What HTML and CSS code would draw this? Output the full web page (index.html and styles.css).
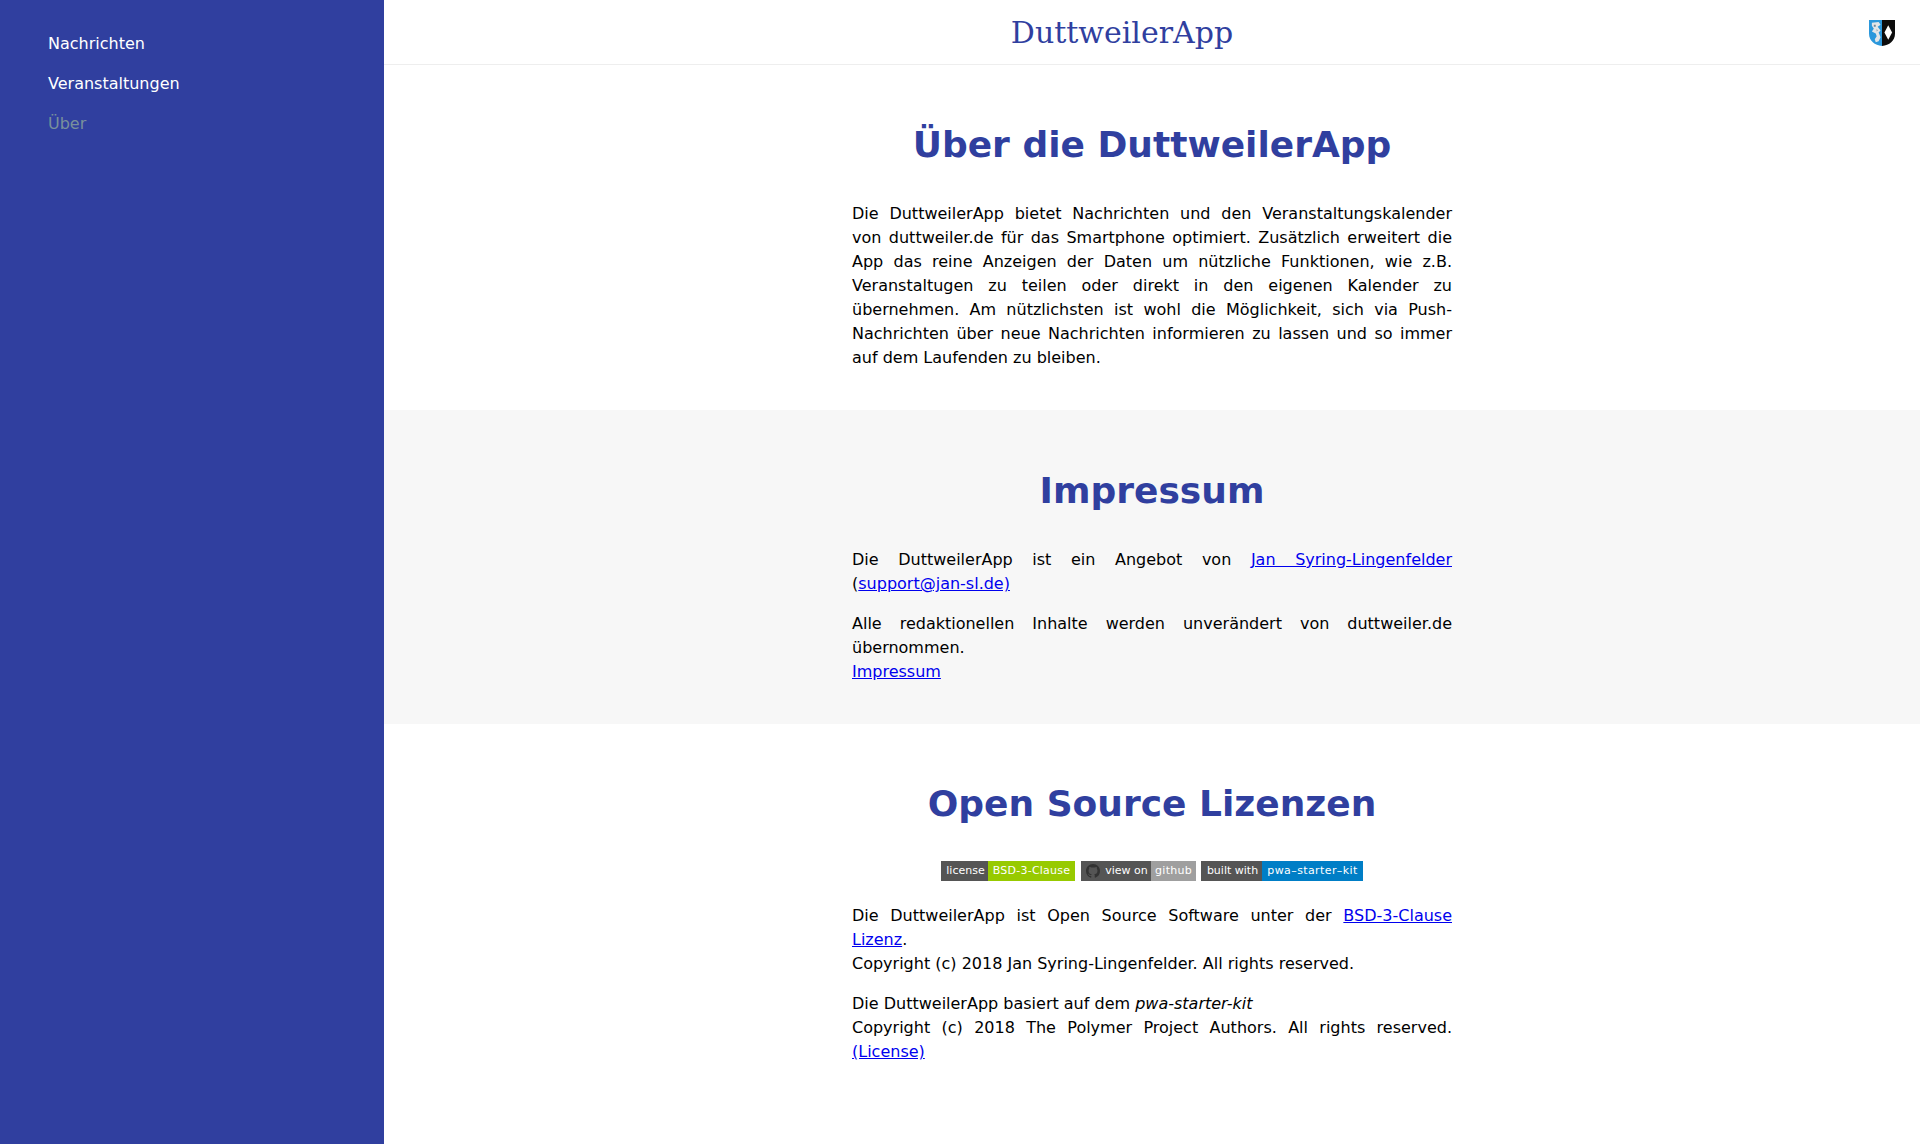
FILE: index.html
```html
<!DOCTYPE html>
<html lang="de">
<head>
  <meta charset="UTF-8">
  <title>DuttweilerApp</title>
  <link rel="stylesheet" href="styles.css">
</head>
<body>
  <nav class="drawer">
    <a href="#">Nachrichten</a>
    <a href="#">Veranstaltungen</a>
    <a href="#" class="selected">Über</a>
  </nav>
  <div class="main">
    <header class="toolbar">
      <div class="title">DuttweilerApp</div>
      <svg class="crest" width="26" height="27" viewBox="0 0 27 28">
        <path d="M0 1H13.500V28C6 27 0 23 0 15Z" fill="#2b98dc"/>
        <path d="M13.500 1H27V15C27 23 21 27 13.500 28Z" fill="#0c0c0c"/>
        <path d="M3 4L10 3L12 6L9 8L12 12L10 14L12 19L10 23L7 24L6 21L8 18L7 15L3 13L5 10L3 7Z" fill="#e3e6e8"/>
        <path d="M5 6L7 6L7 8L5 8ZM8 10L9 12L8 13Z" fill="#6f8799"/>
        <path d="M20 6.500L24 14L20 21.500L16 14Z" fill="#fff"/>
      </svg>
    </header>

    <section>
      <h2>Über die DuttweilerApp</h2>
      <p>Die DuttweilerApp bietet Nachrichten und den Veranstaltungskalender von duttweiler.de für das Smartphone optimiert. Zusätzlich erweitert die App das reine Anzeigen der Daten um nützliche Funktionen, wie z.B. Veranstaltugen zu teilen oder direkt in den eigenen Kalender zu übernehmen. Am nützlichsten ist wohl die Möglichkeit, sich via Push-Nachrichten über neue Nachrichten informieren zu lassen und so immer auf dem Laufenden zu bleiben.</p>
    </section>

    <section class="alt">
      <h2>Impressum</h2>
      <p>Die DuttweilerApp ist ein Angebot von <a href="#">Jan Syring-Lingenfelder</a> (<a href="#">support@jan-sl.de)</a></p>
      <p>Alle redaktionellen Inhalte werden unverändert von duttweiler.de übernommen.<br><a href="#">Impressum</a></p>
    </section>

    <section>
      <h2>Open Source Lizenzen</h2>
      <div class="badges">
        <span class="badge first"><span class="left w47">license</span><span class="right w87 green">BSD-3-Clause</span></span>
        <span class="badge"><span class="left w70">
          <svg class="gh" width="14" height="14" viewBox="0 0 16 16"><path fill="#333" d="M8 0C3.580 0 0 3.580 0 8c0 3.540 2.290 6.530 5.470 7.590.4.070.55-.17.55-.38 0-.19-.01-.82-.01-1.490-2.010.37-2.530-.49-2.690-.94-.09-.23-.48-.94-.82-1.130-.28-.15-.68-.52-.01-.53.630-.01 1.080.58 1.230.82.720 1.210 1.870.87 2.330.66.070-.52.280-.87.510-1.070-1.780-.2-3.640-.89-3.640-3.950 0-.87.310-1.590.820-2.150-.08-.2-.36-1.020.08-2.120 0 0 .67-.21 2.200.82.640-.18 1.320-.27 2-.27s1.360.09 2 .27c1.530-1.040 2.200-.82 2.200-.82.440 1.100.160 1.920.080 2.120.510.560.820 1.270.820 2.150 0 3.070-1.870 3.750-3.650 3.950.290.250.540.730.540 1.480 0 1.070-.01 1.930-.01 2.200 0 .210.150.460.550.380A8.010 8.010 0 0 0 16 8c0-4.420-3.580-8-8-8z"/></svg>
          view on</span><span class="right w45 grey">github</span></span>
        <span class="badge"><span class="left w61">built with</span><span class="right w101 blue">pwa–starter–kit</span></span>
      </div>
      <p>Die DuttweilerApp ist Open Source Software unter der <a href="#">BSD-3-Clause Lizenz</a>.<br>Copyright (c) 2018 Jan Syring-Lingenfelder. All rights reserved.</p>
      <p>Die DuttweilerApp basiert auf dem <em>pwa-starter-kit</em><br>Copyright (c) 2018 The Polymer Project Authors. All rights reserved. <a href="#">(License)</a></p>
    </section>
  </div>
</body>
</html>
```

FILE: styles.css
```css
body {
  margin: 0;
  font-family: "DejaVu Sans", sans-serif;
  font-size: 16px;
  line-height: 24px;
  color: #000;
  background: #fff;
  display: flex;
  min-height: 100vh;
}

.drawer {
  width: 336px;
  flex: none;
  background: #303f9f;
  padding: 24px 0 0 48px;
}

.drawer a {
  display: block;
  color: #fff;
  text-decoration: none;
  height: 40px;
  line-height: 40px;
}

.drawer a.selected {
  color: #78909c;
}

.main {
  flex: 1;
  min-width: 0;
}

.toolbar {
  height: 64px;
  border-bottom: 1px solid #eee;
  display: flex;
  align-items: center;
  padding-right: 25px;
}

.title {
  flex: 1;
  padding-right: 9px;
  text-align: center;
  font-family: "DejaVu Serif", serif;
  font-size: 30px;
  line-height: 67px;
  color: #303f9f;
}

.crest {
  flex: none;
}

section {
  padding: 16px 0 24px;
}

section.alt {
  padding-top: 17px;
  background: #f7f7f7;
}

h2 {
  font-size: 36px;
  font-weight: bold;
  line-height: 44px;
  color: #303f9f;
  text-align: center;
  margin: 42px 0 35px;
}

p {
  width: 600px;
  margin: 16px auto;
  text-align: justify;
}

.badges {
  display: flex;
  justify-content: center;
  gap: 5px;
  margin-bottom: 23px;
}

.badge {
  display: flex;
  height: 20px;
  font-size: 11px;
  line-height: 20px;
  color: #fff;
}

.badge.first {
  margin-right: 1px;
}

.left {
  box-sizing: border-box;
  padding-left: 2px;
  background: #555;
  display: flex;
  align-items: center;
  justify-content: center;
  gap: 5px;
}

.right {
  text-align: center;
  letter-spacing: 0.25px;
}

.w45 { width: 45px; }
.w47 { width: 47px; }
.w61 { width: 61px; }
.w70 { width: 70px; }
.w87 { width: 87px; }
.w101 { width: 101px; letter-spacing: 0.4px; }

.green {
  background: #97ca00;
}

.grey {
  background: #9f9f9f;
}

.blue {
  background: #007ec6;
}
```
